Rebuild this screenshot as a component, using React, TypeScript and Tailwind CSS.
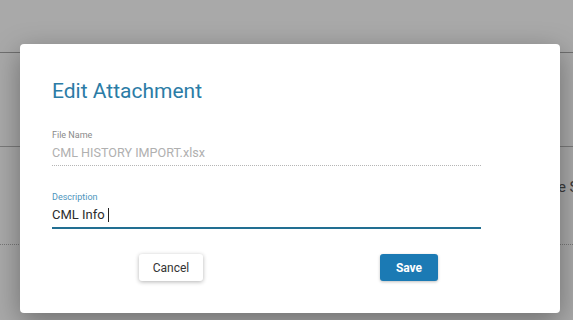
import React from 'react';

const App = () => {
  return (
    <div className="relative h-[320px] w-[573px] overflow-hidden bg-[#a9a9a9] font-['Roboto',sans-serif]">
      {/* page behind the overlay */}
      <div className="h-[53px] border-b border-[#6f6f6f]" />
      <div className="h-[94px] border-b border-[#7a7a7a]" />
      <div className="mt-[29px] whitespace-nowrap pl-[534px] text-[15px] text-[#3a3a3a]">Type Size</div>
      <div className="mt-[45px] border-b border-dotted border-[#777]" />

      {/* dialog */}
      <div className="absolute left-[20px] top-[44px] flex h-[269px] w-[540px] flex-col rounded-[4px] bg-white pl-[32px] pr-[79px] pt-[33px] shadow-[0_8px_28px_rgba(0,0,0,0.35)]">
        <h2 className="text-[21px] leading-[28px] text-[#2b7ca6]">Edit Attachment</h2>

        <div className="mt-[24px] flex flex-col">
          <label className="text-[9px] leading-[12px] text-[#8a8a8a]">File Name</label>
          <div className="mt-[3px] border-b border-dotted border-[#b5b5b5] pb-[3px] text-[12.6px] leading-[18px] text-[#b0b0b0]">
            CML HISTORY IMPORT.xlsx
          </div>
        </div>

        <div className="mt-[25px] flex flex-col">
          <label className="text-[9px] leading-[12px] text-[#4d95bd]">Description</label>
          <div className="mt-[3px] flex items-center border-b-2 border-[#226f92] pb-[3px] text-[13px] leading-[18px] text-[#2c2c2c]">
            <span>CML Info</span>
            <span className="ml-[3px] h-[14px] w-px bg-[#222]" />
          </div>
        </div>

        <div className="mt-[25px] flex items-center">
          <button className="ml-[87px] h-[27px] w-[64px] rounded-[3px] bg-white text-[12px] text-[#333] shadow-[0_1px_4px_rgba(0,0,0,0.3)]">
            Cancel
          </button>
          <button className="ml-[177px] h-[27px] w-[58px] rounded-[3px] bg-[#1b7ab4] text-[12px] font-bold text-white shadow-[0_1px_3px_rgba(0,0,0,0.25)]">
            Save
          </button>
        </div>
      </div>
    </div>
  );
};

export default App;
